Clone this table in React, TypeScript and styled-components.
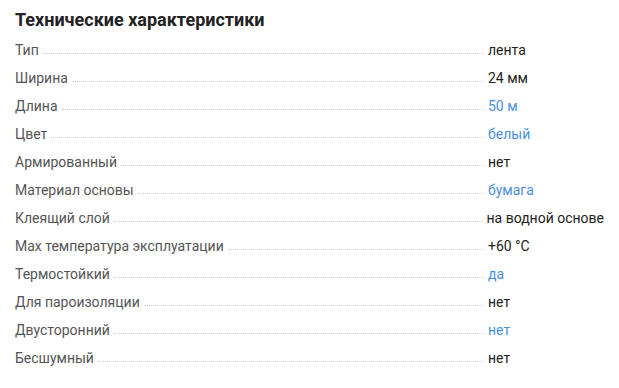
import React from 'react';
import styled, { createGlobalStyle } from 'styled-components';

const GlobalStyle = createGlobalStyle`
  body {
    margin: 0;
    background: #fff;
    font-family: Roboto, "Liberation Sans", sans-serif;
  }
`;

const StyledSpecs = styled.section`
  padding: 7px 15px 0 15px;
`;

const StyledTitle = styled.h2`
  margin: 0 0 3px;
  font-size: 18px;
  line-height: 26px;
  font-weight: 700;
  color: #222;
`;

const StyledRow = styled.div`
  display: flex;
  align-items: flex-start;
  height: 28px;
  line-height: 28px;
  font-size: 14px;
`;

const StyledLabel = styled.span`
  color: #555;
  white-space: nowrap;
`;

const StyledDots = styled.span`
  flex: 1;
  align-self: flex-end;
  margin: 0 4px 10px;
  border-bottom: 1px dotted #d0d0d0;
`;

const StyledValue = styled.span<{ $link?: boolean }>`
  flex: 0 0 116px;
  white-space: nowrap;
  color: ${(props) => (props.$link ? '#4a8fe0' : '#222')};
`;

const specs = [
  { name: 'Тип', value: 'лента' },
  { name: 'Ширина', value: '24 мм' },
  { name: 'Длина', value: '50 м', link: true },
  { name: 'Цвет', value: 'белый', link: true },
  { name: 'Армированный', value: 'нет' },
  { name: 'Материал основы', value: 'бумага', link: true },
  { name: 'Клеящий слой', value: 'на водной основе' },
  { name: 'Max температура эксплуатации', value: '+60 °C' },
  { name: 'Термостойкий', value: 'да', link: true },
  { name: 'Для пароизоляции', value: 'нет' },
  { name: 'Двусторонний', value: 'нет', link: true },
  { name: 'Бесшумный', value: 'нет' },
];

const App = () => {
  return (
    <>
      <GlobalStyle />
      <StyledSpecs>
        <StyledTitle>Технические характеристики</StyledTitle>
        {specs.map((spec) => (
          <StyledRow key={spec.name}>
            <StyledLabel>{spec.name}</StyledLabel>
            <StyledDots />
            <StyledValue $link={spec.link}>{spec.value}</StyledValue>
          </StyledRow>
        ))}
      </StyledSpecs>
    </>
  );
};

export default App;
